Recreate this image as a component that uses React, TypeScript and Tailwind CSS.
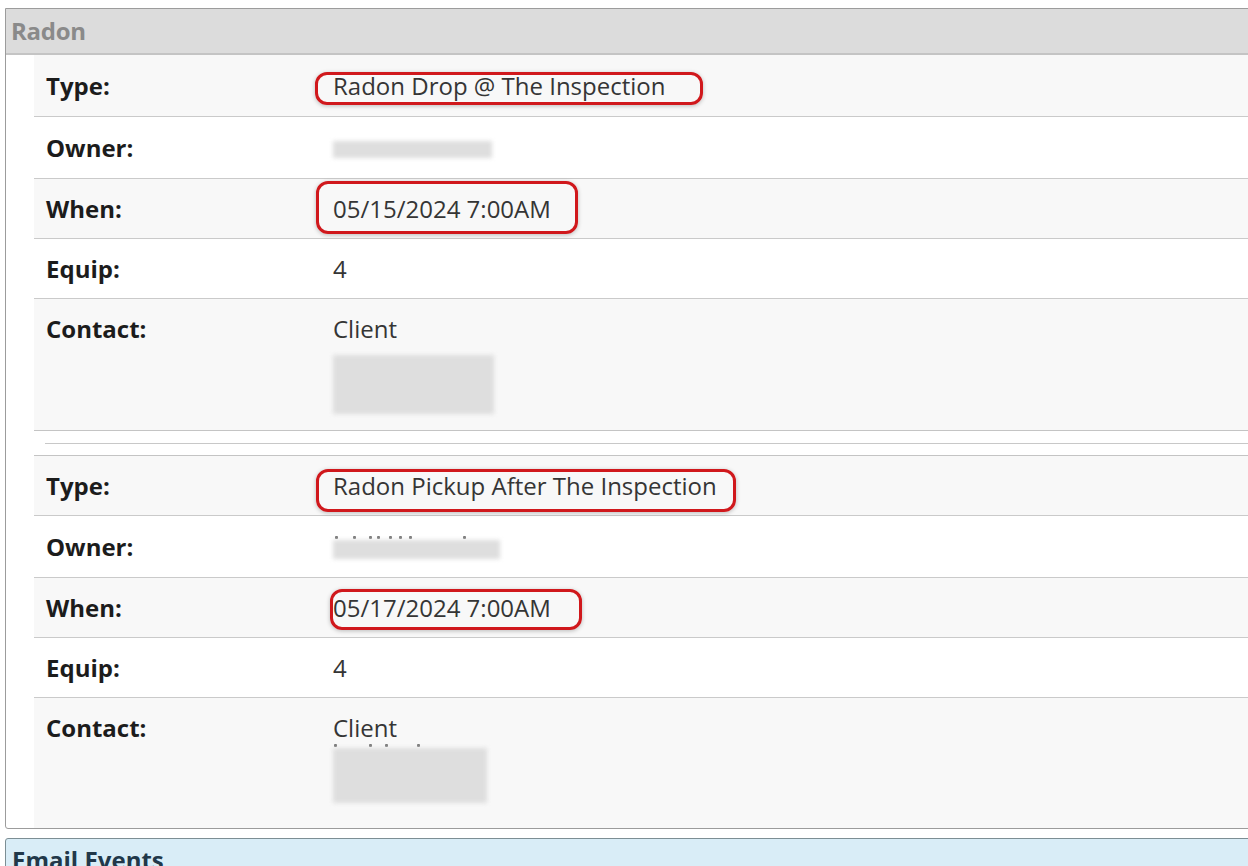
import React from 'react';

type Mark = { left: number; top: number; width: number; height: number };

type Row = {
  label: string;
  value?: React.ReactNode;
  mark?: Mark;
  tall?: boolean;
  shade: boolean;
  h: string;
};

const Blur: React.FC<{ w: number; h: number; className?: string }> = ({ w, h, className }) => (
  <div className={`bg-[#dedede] blur-[2px] ${className || ''}`} style={{ width: w, height: h }} />
);

// red hand-drawn style highlight around a value
const Circle: React.FC<{ m: Mark }> = ({ m }) => (
  <span
    className="absolute rounded-[12px] border-[3px] border-[#d0181c] shadow-[0_1px_4px_rgba(0,0,0,0.25)] pointer-events-none"
    style={{ left: m.left, top: m.top, width: m.width, height: m.height }}
  />
);

// leftover tops of blurred-out letters
const Specks: React.FC<{ xs: number[] }> = ({ xs }) => (
  <div className="relative h-[3px]">
    {xs.map((x, i) => (
      <span key={i} className="absolute top-0 w-[3px] h-[3px] bg-[#777] rounded-[1px]" style={{ left: x }} />
    ))}
  </div>
);

const DetailRow: React.FC<{ row: Row; first?: boolean }> = ({ row, first }) => (
  <div
    className={`flex ${row.tall ? 'items-start pt-[15px]' : 'items-center'} ${row.h} ${row.shade ? 'bg-[#f8f8f8]' : 'bg-white'} ${first ? '' : 'border-t border-[#cacaca]'}`}
  >
    <div className="w-[299px] pl-3 font-bold text-[#1c1c1c] shrink-0">{row.label}</div>
    <div className="relative flex-1 text-[#353535]">
      {row.value}
      {row.mark && <Circle m={row.mark} />}
    </div>
  </div>
);

const group1: Row[] = [
  { label: 'Type:', value: 'Radon Drop @ The Inspection', mark: { left: -18, top: 1, width: 388, height: 33 }, shade: true, h: 'h-[61px]' },
  { label: 'Owner:', value: <Blur w={159} h={17} className="mt-1" />, shade: false, h: 'h-[62px]' },
  { label: 'When:', value: '05/15/2024 7:00AM', mark: { left: -17, top: -13, width: 262, height: 53 }, shade: true, h: 'h-[60px]' },
  { label: 'Equip:', value: '4', shade: false, h: 'h-[60px]' },
  {
    label: 'Contact:',
    value: (
      <div>
        <div>Client</div>
        <Blur w={161} h={59} className="mt-[11px]" />
      </div>
    ),
    tall: true,
    shade: true,
    h: 'h-[132px]',
  },
];

const group2: Row[] = [
  { label: 'Type:', value: 'Radon Pickup After The Inspection', mark: { left: -17, top: -2, width: 420, height: 43 }, shade: true, h: 'h-[59px]' },
  {
    label: 'Owner:',
    value: (
      <div className="pt-[2px]">
        <Specks xs={[2, 20, 36, 44, 56, 66, 76, 130]} />
        <Blur w={167} h={19} className="mt-[1px]" />
      </div>
    ),
    shade: false,
    h: 'h-[62px]',
  },
  { label: 'When:', value: '05/17/2024 7:00AM', mark: { left: -3, top: -4, width: 252, height: 41 }, shade: true, h: 'h-[60px]' },
  { label: 'Equip:', value: '4', shade: false, h: 'h-[60px]' },
  {
    label: 'Contact:',
    value: (
      <div>
        <div>Client</div>
        <div className="mt-[1px]">
          <Specks xs={[1, 36, 52, 84]} />
          <Blur w={154} h={55} className="mt-[1px]" />
        </div>
      </div>
    ),
    tall: true,
    shade: true,
    h: 'h-[131px]',
  },
];

export default function App() {
  return (
    <div
      className="w-[1248px] h-[866px] overflow-hidden bg-white pt-2 text-[24px] leading-[30px]"
      style={{ fontFamily: '"Open Sans", "Noto Sans", Arial, sans-serif' }}
    >
      <div className="ml-[5px] w-[1260px] border border-[#9c9c9c] rounded-bl-[3px] bg-white">
        <div className="h-[46px] bg-[#dcdcdc] border-b-2 border-[#c4c4c4] flex items-center pl-[5px] font-bold text-[#8a8a8a] tracking-[-0.3px]">
          Radon
        </div>
        <div className="pl-[28px]">
          <div className="border-b border-[#c4c4c4]">
            {group1.map((r, i) => (
              <DetailRow key={'a' + i} row={r} first={i === 0} />
            ))}
          </div>
          <div className="h-[24px] flex items-center pl-[11px]">
            <div className="w-full border-t border-[#c8c8c8]" />
          </div>
          <div className="border-t border-[#c4c4c4]">
            {group2.map((r, i) => (
              <DetailRow key={'b' + i} row={r} first={i === 0} />
            ))}
          </div>
        </div>
      </div>
      <div className="mt-[9px] ml-[5px] w-[1260px] h-[40px] border border-[#7c8e94] bg-[#d9edf7] rounded-tl-[3px] pl-[6px] pt-[6px] font-bold text-[#21384a]">
        Email Events
      </div>
    </div>
  );
}
